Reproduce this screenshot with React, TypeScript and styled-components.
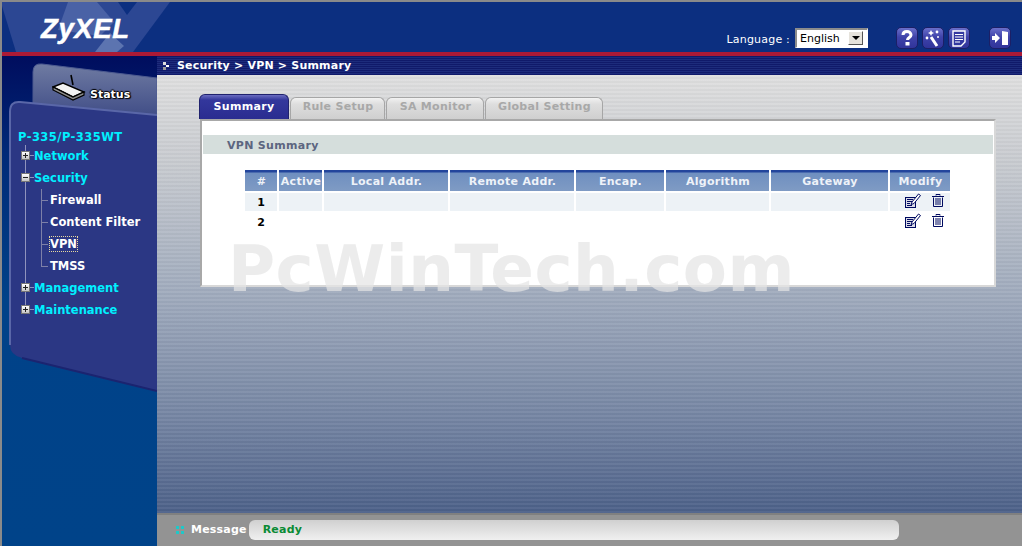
import React from "react";
import styled, { createGlobalStyle } from "styled-components";

const Global = createGlobalStyle`
  html, body { margin: 0; padding: 0; background: #888; }
  * { box-sizing: border-box; }
  body { font-family: "DejaVu Sans", Verdana, sans-serif; font-size: 11px; overflow: hidden; }
`;

const Page = styled.div`
  position: relative;
  width: 1022px;
  height: 546px;
  border-top: 2px solid #8a8a8a;
  border-left: 2px solid #8a8a8a;
  display: flex;
  flex-direction: column;
  overflow: hidden;
`;

const Header = styled.header`
  position: relative;
  height: 54px;
  flex: none;
  background: #0c2f80;
  border-bottom: 4px solid #ab1a36;
  display: flex;
  align-items: flex-start;
  overflow: hidden;
`;

const HeaderArt = styled.svg`
  position: absolute;
  left: 0;
  top: 0;
`;

const Logo = styled.div`
  position: relative;
  margin: 11px 0 0 39px;
  font: italic bold 27.5px/32px "Liberation Sans", Arial, sans-serif;
  letter-spacing: 0.6px;
  -webkit-text-stroke: 0.5px #fff;
  color: #fff;
  width: 100px;
`;

const HeaderTools = styled.div`
  position: relative;
  margin: 25px 11px 0 auto;
  display: flex;
  align-items: center;
`;

const LangLabel = styled.span`
  color: #fff;
  font-size: 11px;
  letter-spacing: 0.2px;
  margin-right: 5px;
  padding-top: 2px;
`;

const LangSelect = styled.div`
  width: 73px;
  height: 20px;
  background: #fff;
  border-top: 2px solid #8c8c8c;
  border-left: 2px solid #8c8c8c;
  border-right: 1px solid #fff;
  border-bottom: 1px solid #fff;
  display: flex;
  align-items: center;
  justify-content: space-between;
  color: #000;
  font-size: 11px;
  padding: 0 4px 1px 3px;
`;

const LangArrow = styled.span`
  width: 15px;
  height: 14px;
  background: #e6e3dc;
  border: 1px solid;
  border-color: #fff #555 #555 #fff;
  display: flex;
  align-items: center;
  justify-content: center;
  &::after {
    content: "";
    border-left: 4px solid transparent;
    border-right: 4px solid transparent;
    border-top: 4px solid #000;
  }
`;

const ToolButton = styled.button<{ $gap?: number }>`
  width: 22px;
  height: 22px;
  margin-left: ${(p) => p.$gap ?? 4}px;
  padding: 0;
  border: 1px solid #1c1f66;
  border-radius: 5px;
  background: linear-gradient(180deg, #6a6fca 0%, #3f43aa 45%, #30349a 100%);
  display: flex;
  align-items: center;
  justify-content: center;
`;

const Body = styled.div`
  flex: 1;
  min-height: 0;
  display: flex;
`;

const Sidebar = styled.aside`
  position: relative;
  width: 155px;
  flex: none;
  background: linear-gradient(180deg, #000d5e 0%, #002a78 20%, #004289 50%, #004389 100%);
`;

const SidebarArt = styled.svg`
  position: absolute;
  left: 0;
  top: 0;
`;

const StatusTab = styled.div`
  position: relative;
  height: 73px;
  padding: 32px 0 0 88px;
  color: #fff;
  font-weight: bold;
  font-size: 11px;
  text-shadow: 1px 1px 1px #000, -1px 0 1px #000, 0 -1px 1px #000, 1px 0 1px #000;
`;

const RouterIcon = styled.svg`
  position: absolute;
  left: 50px;
  top: 17px;
`;

const Nav = styled.nav`
  position: relative;
  padding-left: 16px;
  font-weight: bold;
  font-size: 11.5px;
`;

const Model = styled.div`
  color: #00f0ff;
  height: 16px;
  line-height: 16px;
  letter-spacing: 0.45px;
`;

const Tree = styled.div`
  position: relative;
  &::before {
    content: "";
    position: absolute;
    left: 7px;
    top: 0;
    bottom: 11px;
    width: 1px;
    background: #8f93bd;
  }
`;

const Row = styled.div`
  position: relative;
  height: 22px;
  display: flex;
  align-items: center;
  color: #00f0ff;
  padding-left: 16px;
  &::before {
    content: "";
    position: absolute;
    left: 12px;
    top: 10px;
    width: 4px;
    height: 1px;
    background: #8f93bd;
  }
`;

const Expander = styled.span<{ $open?: boolean }>`
  position: absolute;
  left: 3px;
  top: 6px;
  width: 9px;
  height: 9px;
  background: linear-gradient(180deg, #fff, #c4c4c4);
  border: 1px solid #777;
  &::before {
    content: "";
    position: absolute;
    left: 1px;
    top: 2.5px;
    width: 5px;
    height: 1px;
    background: #222;
  }
  &::after {
    content: "";
    display: ${(p) => (p.$open ? "none" : "block")};
    position: absolute;
    left: 3px;
    top: 1px;
    width: 1px;
    height: 5px;
    background: #222;
  }
`;

const SubTree = styled.div`
  position: relative;
  &::before {
    content: "";
    position: absolute;
    left: 23px;
    top: 0;
    bottom: 10px;
    width: 1px;
    background: #7d80a8;
  }
`;

const SubRow = styled.div`
  position: relative;
  height: 22px;
  display: flex;
  align-items: center;
  padding-left: 32px;
  color: #fff;
  &::before {
    content: "";
    position: absolute;
    left: 24px;
    top: 11px;
    width: 6px;
    height: 1px;
    background: #7d80a8;
  }
`;

const Focused = styled.span`
  outline: 1px dotted #e8d9a0;
`;

const Main = styled.main`
  flex: 1;
  min-width: 0;
  display: flex;
  flex-direction: column;
`;

const Breadcrumb = styled.div`
  height: 19px;
  flex: none;
  background: repeating-linear-gradient(180deg, #101a6a 0, #101a6a 1px, #1d2c7c 1px, #1d2c7c 2px);
  color: #fff;
  font-weight: bold;
  font-size: 11px;
  display: flex;
  align-items: center;
  gap: 8px;
  padding-left: 6px;
  letter-spacing: 0.2px;
`;

const Crumb = styled.span`
  width: 6px;
  height: 8px;
  background:
    linear-gradient(#ddd, #ddd) 0 0 / 3px 3px no-repeat,
    linear-gradient(#fff, #fff) 3px 3px / 3px 2px no-repeat,
    linear-gradient(#999, #999) 0 5px / 3px 3px no-repeat;
`;

const Content = styled.div`
  position: relative;
  flex: 1;
  min-height: 0;
  background:
    repeating-linear-gradient(180deg, rgba(255,255,255,0.05) 0, rgba(255,255,255,0.05) 2px, rgba(0,0,0,0.025) 2px, rgba(0,0,0,0.025) 4px),
    linear-gradient(180deg, #dfdfdf 0%, #c8cbd0 20%, #a0abbd 50%, #7585a3 78%, #4c6088 100%);
  padding: 19px 26px 0 42px;
`;

const Tabs = styled.div`
  display: flex;
  align-items: flex-end;
  height: 25px;
`;

const Tab = styled.div<{ $active?: boolean; $w: number }>`
  width: ${(p) => p.$w}px;
  height: ${(p) => (p.$active ? 25 : 22)}px;
  margin-right: 1px;
  border-radius: 6px 6px 0 0;
  display: flex;
  align-items: center;
  justify-content: center;
  font-weight: bold;
  font-size: 11px;
  letter-spacing: 0.3px;
  padding-left: ${(p) => (p.$active ? 0 : 1)}px;
  padding-bottom: ${(p) => (p.$active ? 2 : 5)}px;
  color: ${(p) => (p.$active ? "#fff" : "#a8a8a8")};
  background: ${(p) =>
    p.$active
      ? "linear-gradient(180deg, #6a6cc0 0, #33379c 5px, #2a2c90 100%)"
      : "linear-gradient(180deg, #f2f2f2 0, #dedede 6px, #cfcfcf 100%)"};
  border: 1px solid ${(p) => (p.$active ? "#20226e" : "#a6a6a6")};
  border-bottom: none;
`;

const Panel = styled.section`
  margin-left: 1px;
  height: 168px;
  background: #fff;
  border: 2px solid #d8d8d8;
  border-left-color: #a8a8a8;
  border-top-color: #a8a8a8;
  padding: 14px 1px 0 1px;
`;

const SectionTitle = styled.div`
  height: 19px;
  background: #d5dedc;
  color: #5c6580;
  font-weight: bold;
  font-size: 11px;
  letter-spacing: 0.3px;
  padding: 2px 0 0 24px;
  display: flex;
  align-items: center;
`;

const Table = styled.table`
  margin: 14px 0 0 40px;
  border-collapse: separate;
  border-spacing: 2px 2px;
  table-layout: fixed;
  width: 709px;
`;

const Th = styled.th<{ $w: number }>`
  width: ${(p) => p.$w}px;
  height: 21px;
  padding: 2px 0 0 1px;
  color: #eef2f8;
  font-weight: bold;
  font-size: 11px;
  letter-spacing: 0.3px;
  text-align: center;
  white-space: nowrap;
  background: linear-gradient(180deg, #23459c 0, #23459c 2px, #6f8fc0 3px, #7f9bc4 100%);
`;

const Tr = styled.tr<{ $shade?: boolean }>`
  td {
    background: ${(p) => (p.$shade ? "#edf2f6" : "#fff")};
  }
`;

const Td = styled.td`
  height: 18px;
  padding: 0;
  text-align: center;
  font-weight: bold;
  font-size: 11px;
  color: #000;
`;

const Actions = styled.div`
  display: flex;
  align-items: center;
  justify-content: flex-end;
  gap: 11px;
  padding: 0 6px 3px 0;
  height: 18px;
`;

const Watermark = styled.div`
  position: absolute;
  left: 71px;
  top: 156px;
  font-weight: bold;
  font-size: 64.3px;
  line-height: 76px;
  letter-spacing: 0.5px;
  white-space: nowrap;
  color: rgba(228, 228, 228, 0.72);
  pointer-events: none;
`;

const Footer = styled.footer`
  height: 33px;
  flex: none;
  background: #939393;
  border-top: 2px solid #808080;
  display: flex;
  align-items: center;
  padding: 0 123px 2px 19px;
  color: #fff;
  font-weight: bold;
  font-size: 11px;
  letter-spacing: 0.2px;
`;

const Dots = styled.span`
  width: 8px;
  height: 8px;
  margin-right: 7px;
  flex: none;
  background:
    linear-gradient(#1fc8c8, #1fc8c8) 0 0 / 3px 3px no-repeat,
    linear-gradient(#1fc8c8, #1fc8c8) 5px 0 / 3px 3px no-repeat,
    linear-gradient(#1fc8c8, #1fc8c8) 0 5px / 3px 3px no-repeat,
    linear-gradient(#1fc8c8, #1fc8c8) 5px 5px / 3px 3px no-repeat;
`;

const MessageBar = styled.div`
  flex: 1;
  height: 20px;
  margin-left: 2px;
  border-radius: 6px;
  background: linear-gradient(180deg, #d0d0d0 0%, #f0f0f0 100%);
  color: #0a8a34;
  display: flex;
  align-items: center;
  padding-left: 14px;
`;

const EditIcon = () => (
  <svg width="16" height="15" viewBox="0 0 16 15">
    <rect x="0.5" y="4.5" width="10" height="10" fill="#dcdce8" stroke="#000a60" />
    <path d="M2 6.5h6M2 8.5h5M2 10.5h3M2 12.5h5" stroke="#000a60" />
    <path d="M6 11.5 L7 9 L13.5 1 L15.5 2.5 L9 10.5 Z" stroke="#000a60" fill="#fff" />
  </svg>
);

const TrashIcon = () => (
  <svg width="12" height="13" viewBox="0 0 12 13">
    <path d="M4 1.5V.5h4v1M0 2.5h12" stroke="#000a60" fill="none" />
    <path d="M1.5 3.5v9h9v-9" stroke="#000a60" fill="none" />
    <path d="M4 4v7M6 4v7M8 4v7" stroke="#000a60" />
  </svg>
);

const columns: [string, number][] = [
  ["#", 32],
  ["Active", 43],
  ["Local Addr.", 124],
  ["Remote Addr.", 124],
  ["Encap.", 88],
  ["Algorithm", 103],
  ["Gateway", 117],
  ["Modify", 60],
];

export default function App() {
  return (
    <Page>
      <Global />
      <Header>
        <HeaderArt width="170" height="50" viewBox="2 2 170 50">
          <path d="M2 2H170L133 52H2Z" fill="#2c4793" />
          <path d="M2 6L16 52H2Z" fill="#0c2f80" />
          <path d="M68 2H97L114 22L100 36L58 30Z" fill="#4a62a6" />
          <path d="M110 33L124 46L117 52H95Z" fill="#5c74b0" />
          <path d="M118 2H137L127 15Z" fill="#0c2f80" />
        </HeaderArt>
        <Logo>ZyXEL</Logo>
        <HeaderTools>
          <LangLabel>Language :</LangLabel>
          <LangSelect>
            English
            <LangArrow />
          </LangSelect>
          <ToolButton $gap={28} aria-label="Help">
            <svg width="14" height="16" viewBox="0 0 14 16">
              <path d="M3 5C3 2.5 5 1.5 7 1.5S11 2.8 11 5C11 7.5 7.5 7.5 7.5 10" fill="none" stroke="#fff" strokeWidth="3" />
              <rect x="5.5" y="12" width="4" height="3.5" fill="#fff" />
            </svg>
          </ToolButton>
          <ToolButton aria-label="Wizard">
            <svg width="18" height="18" viewBox="0 0 18 18">
              <path d="M7 8L13 17" stroke="#fff" strokeWidth="3" />
              <path d="M7 1l1 2 2 1-2 1-1 2-1-2-2-1 2-1z" fill="#fff" />
              <circle cx="13" cy="3" r="1.4" fill="#fff" />
              <circle cx="3" cy="9" r="1.4" fill="#fff" />
              <circle cx="14" cy="8" r="1" fill="#fff" />
            </svg>
          </ToolButton>
          <ToolButton aria-label="Notes">
            <svg width="14" height="17" viewBox="0 0 14 17">
              <path d="M1 1H13V12L9 16H1Z" fill="#3338a0" stroke="#fff" strokeWidth="1.4" />
              <path d="M3 4.5H11M3 7H11M3 9.5H11M3 12H8" stroke="#fff" />
            </svg>
          </ToolButton>
          <ToolButton $gap={19} aria-label="Logout">
            <svg width="18" height="16" viewBox="0 0 18 16">
              <path d="M11 1L17 2V15L11 15Z" fill="#fff" />
              <path d="M1 6H4V3L9 8L4 13V10H1Z" fill="#fff" />
            </svg>
          </ToolButton>
        </HeaderTools>
      </Header>
      <Body>
        <Sidebar>
          <SidebarArt width="155" height="490" viewBox="2 56 155 490">
            <defs>
              <linearGradient id="tabFill" x1="0" y1="0" x2="0" y2="1">
                <stop offset="0" stopColor="#6f7ba2" />
                <stop offset="1" stopColor="#3d4a85" />
              </linearGradient>
            </defs>
            <path d="M33 72Q33 63 42 64L157 78V120H33Z" fill="url(#tabFill)" stroke="#4c5a90" />
            <path d="M10 112Q10 101 20 102L157 115V391L22 358Q10 355 10 345Z" fill="#2b3784" />
            <path d="M10 345V112Q10 101 20 102L157 115" fill="none" stroke="#5a67a8" strokeWidth="2" />
            <path d="M22 358L157 391" stroke="#1b2470" strokeWidth="2" />
          </SidebarArt>
          <StatusTab>
            <RouterIcon width="36" height="30" viewBox="0 0 36 30">
              <path d="M19 2L21 12" stroke="#000" strokeWidth="1.6" />
              <path d="M1 14L11 10L32 19L21 24Z" fill="#f2f2f2" stroke="#000" strokeWidth="1.4" />
              <path d="M1 14V17L21 27L32 22V19L21 24Z" fill="#8a8a8a" stroke="#000" strokeWidth="1.2" />
            </RouterIcon>
            Status
          </StatusTab>
          <Nav>
            <Model>P-335/P-335WT</Model>
            <Tree>
              <Row><Expander />Network</Row>
              <Row><Expander $open />Security</Row>
              <SubTree>
                <SubRow>Firewall</SubRow>
                <SubRow>Content Filter</SubRow>
                <SubRow><Focused>VPN</Focused></SubRow>
                <SubRow>TMSS</SubRow>
              </SubTree>
              <Row><Expander />Management</Row>
              <Row><Expander />Maintenance</Row>
            </Tree>
          </Nav>
        </Sidebar>
        <Main>
          <Breadcrumb>
            <Crumb />
            Security &gt; VPN &gt; Summary
          </Breadcrumb>
          <Content>
            <Tabs>
              <Tab $active $w={90}>Summary</Tab>
              <Tab $w={95}>Rule Setup</Tab>
              <Tab $w={98}>SA Monitor</Tab>
              <Tab $w={118}>Global Setting</Tab>
            </Tabs>
            <Panel>
              <SectionTitle>VPN Summary</SectionTitle>
              <Table>
                <thead>
                  <tr>
                    {columns.map(([name, w]) => (
                      <Th key={name} $w={w}>{name}</Th>
                    ))}
                  </tr>
                </thead>
                <tbody>
                  {[1, 2].map((n) => (
                    <Tr key={n} $shade={n === 1}>
                      <Td>{n}</Td>
                      <Td /><Td /><Td /><Td /><Td /><Td />
                      <Td>
                        <Actions>
                          <EditIcon />
                          <TrashIcon />
                        </Actions>
                      </Td>
                    </Tr>
                  ))}
                </tbody>
              </Table>
            </Panel>
            <Watermark>PcWinTech.com</Watermark>
          </Content>
          <Footer>
            <Dots />
            Message
            <MessageBar>Ready</MessageBar>
          </Footer>
        </Main>
      </Body>
    </Page>
  );
}
